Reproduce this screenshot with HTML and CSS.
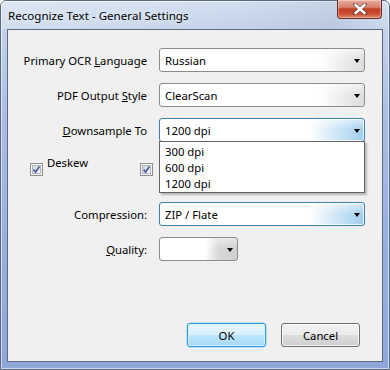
FILE: index.html
```html
<!DOCTYPE html>
<html>
<head>
<meta charset="utf-8">
<link rel="stylesheet" href="styles.css">
</head>
<body>
<div class="window">
  <div class="titlebar">
    <span class="title">Recognize Text - General Settings</span>
    <div class="close">
      <svg width="16" height="12" viewBox="0 0 16 12">
        <path d="M3 1.5 L13 10.5 M13 1.5 L3 10.5" stroke="#3a3a3a" stroke-width="4.2" stroke-linecap="round" opacity="0.55"/>
        <path d="M3.5 2 L12.5 10 M12.5 2 L3.5 10" stroke="#fff" stroke-width="2.6" stroke-linecap="round"/>
      </svg>
    </div>
  </div>
  <div class="client">
    <div class="form">
      <div class="row">
        <span class="label">Primary OCR <u>L</u>anguage</span>
        <div class="combo"><span>Russian</span><i class="arrow"></i></div>
      </div>
      <div class="row">
        <span class="label">PDF Output <u>S</u>tyle</span>
        <div class="combo"><span>ClearScan</span><i class="arrow"></i></div>
      </div>
      <div class="row">
        <span class="label"><u>D</u>ownsample To</span>
        <div class="combo focus"><span>1200 dpi</span><i class="arrow"></i></div>
      </div>
      <div class="checks">
        <div class="check">
          <svg class="box" width="13" height="13" viewBox="0 0 13 13">
            <defs>
              <linearGradient id="cg" x1="0" y1="0" x2="1" y2="1">
                <stop offset="0" stop-color="#cfd1d4"/>
                <stop offset="1" stop-color="#fbfbfb"/>
              </linearGradient>
            </defs>
            <rect x="0.5" y="0.5" width="12" height="12" fill="#f4f4f4" stroke="#8f8f8f"/>
            <rect x="2.5" y="2.5" width="8" height="8" fill="url(#cg)" stroke="#b3b6ba"/>
            <path d="M3.6 6.6 L5.6 9 L9.4 3.6" fill="none" stroke="#4b5fa0" stroke-width="1.7"/>
          </svg>
          <span class="ctext">Deskew</span>
        </div>
        <div class="check second">
          <svg class="box" width="13" height="13" viewBox="0 0 13 13">
            <rect x="0.5" y="0.5" width="12" height="12" fill="#f4f4f4" stroke="#8f8f8f"/>
            <rect x="2.5" y="2.5" width="8" height="8" fill="url(#cg)" stroke="#b3b6ba"/>
            <path d="M3.6 6.6 L5.6 9 L9.4 3.6" fill="none" stroke="#4b5fa0" stroke-width="1.7"/>
          </svg>
        </div>
      </div>
      <div class="row">
        <span class="label">Compression:</span>
        <div class="combo focus"><span>ZIP / Flate</span><i class="arrow"></i></div>
      </div>
      <div class="row">
        <span class="label"><u>Q</u>uality:</span>
        <div class="combo small"><span></span><i class="arrow"></i></div>
      </div>
    </div>
    <div class="buttons">
      <div class="btn default">OK</div>
      <div class="btn">Cancel</div>
    </div>
    <div class="droplist">
      <div class="item">300 dpi</div>
      <div class="item">600 dpi</div>
      <div class="item">1200 dpi</div>
    </div>
  </div>
</div>
</body>
</html>
```
FILE: styles.css
```css
html, body {
  margin: 0;
  padding: 0;
  background: #ffffff;
}
body {
  font-family: "Noto Sans", "Open Sans", sans-serif;
  font-size: 11.3px;
  color: #000;
}
.window {
  width: 390px;
  height: 370px;
  box-sizing: border-box;
  border: 1px solid #5b6a7d;
  border-radius: 6px 6px 0 0;
  padding: 0 6px 7px 6px;
  display: flex;
  flex-direction: column;
  background: linear-gradient(to bottom, #d2dff0 0px, #c3d3ea 28px, #a9bde3 120px, #97aedd 260px, #8fa6da 370px);
  box-shadow: inset 0 0 0 1px rgba(255,255,255,0.55);
}
.titlebar {
  height: 28px;
  display: flex;
  align-items: center;
  justify-content: space-between;
  background: linear-gradient(to right, rgba(255,255,255,0.25), rgba(255,255,255,0) 60%, rgba(120,130,150,0.12) 85%, rgba(255,255,255,0.1));
  margin: 0 -6px;
  padding: 0 7px 0 7px;
}
.title {
  font-size: 11.6px;
  margin-top: 1px;
  color: #000;
  text-shadow: 0 0 6px rgba(255,255,255,0.9);
}
.close {
  align-self: flex-start;
  width: 45px;
  height: 19px;
  margin-top: -1px;
  box-sizing: border-box;
  border: 1px solid #6b2a22;
  border-top: none;
  border-radius: 0 0 4px 4px;
  background: linear-gradient(to bottom, #e9a99c 0%, #d8806e 40%, #c23f28 50%, #cc4a32 75%, #e08a6a 100%);
  display: flex;
  align-items: center;
  justify-content: center;
  box-shadow: inset 0 0 0 1px rgba(255,255,255,0.35);
}
.client {
  position: relative;
  flex: 1;
  border: 1px solid #5d6b7f;
  background: #f0f0f0;
  display: flex;
  flex-direction: column;
}
.form {
  padding-top: 18px;
  display: flex;
  flex-direction: column;
}
.row {
  display: grid;
  grid-template-columns: 139px auto;
  column-gap: 12px;
  align-items: center;
  margin-bottom: 11px;
}
.label {
  text-align: right;
  white-space: nowrap;
}
.combo {
  width: 206px;
  height: 24px;
  box-sizing: border-box;
  border: 1px solid #8c8c8c;
  border-radius: 3px;
  display: flex;
  align-items: center;
  justify-content: space-between;
  padding: 0 3px 0 5px;
  background:
    linear-gradient(to bottom, rgba(255,255,255,0.6), rgba(255,255,255,0) 50%),
    linear-gradient(to right, #ffffff 0, #ffffff calc(100% - 45px), #dcdcdc 100%);
}
.combo.small {
  width: 79px;
  background:
    linear-gradient(to bottom, rgba(255,255,255,0.5), rgba(255,255,255,0) 50%),
    linear-gradient(to right, #ffffff 0, #ffffff calc(100% - 32px), #d6d6d6 calc(100% - 18px), #d0d0d0 100%);
}
.combo.focus {
  border-color: #3c7fb1;
  box-shadow: inset 0 0 0 1px rgba(255,255,255,0.8);
  background:
    linear-gradient(to bottom, rgba(255,255,255,0.55), rgba(255,255,255,0) 50%),
    linear-gradient(to right, #ffffff 0, #ffffff calc(100% - 55px), #9fcdee 100%);
}
.arrow {
  width: 0;
  height: 0;
  border-left: 3.5px solid transparent;
  border-right: 3.5px solid transparent;
  border-top: 4px solid #000;
  margin-top: 2px;
  margin-right: 1px;
}
.checks {
  display: flex;
  height: 38px;
  margin-bottom: 11px;
}
.check {
  display: flex;
  align-items: flex-start;
  margin-left: 22px;
}
.check .box {
  margin-top: 10px;
  display: block;
}
.ctext {
  margin-left: 4px;
  margin-top: 2px;
}
.check.second {
  margin-left: 52px;
}
.buttons {
  margin-top: auto;
  display: flex;
  justify-content: flex-end;
  gap: 15px;
  padding: 0 22px 14px 0;
}
.btn {
  width: 79px;
  height: 24px;
  box-sizing: border-box;
  border: 1px solid #707070;
  border-radius: 3px;
  display: flex;
  align-items: center;
  justify-content: center;
  background: linear-gradient(to bottom, #f2f2f2 0%, #ebebeb 49%, #dddddd 50%, #cfcfcf 100%);
  box-shadow: inset 0 0 0 1px rgba(255,255,255,0.75);
}
.btn.default {
  border-color: #3399dd;
  background: linear-gradient(to bottom, #eaf6fd 0%, #d9f0fc 49%, #bee6fd 50%, #a7d9f5 100%);
  box-shadow: inset 0 0 0 1px #d8f1fd, 0 0 0 0.5px #8fd2f5;
}
.droplist {
  position: absolute;
  left: 151px;
  top: 111px;
  width: 206px;
  height: 52px;
  box-sizing: border-box;
  border: 1px solid #646464;
  background: #ffffff;
  padding: 2px 0 0 5px;
  box-shadow: 2px 2px 2px rgba(0,0,0,0.25);
}
.item {
  height: 16px;
  line-height: 16px;
}
```
